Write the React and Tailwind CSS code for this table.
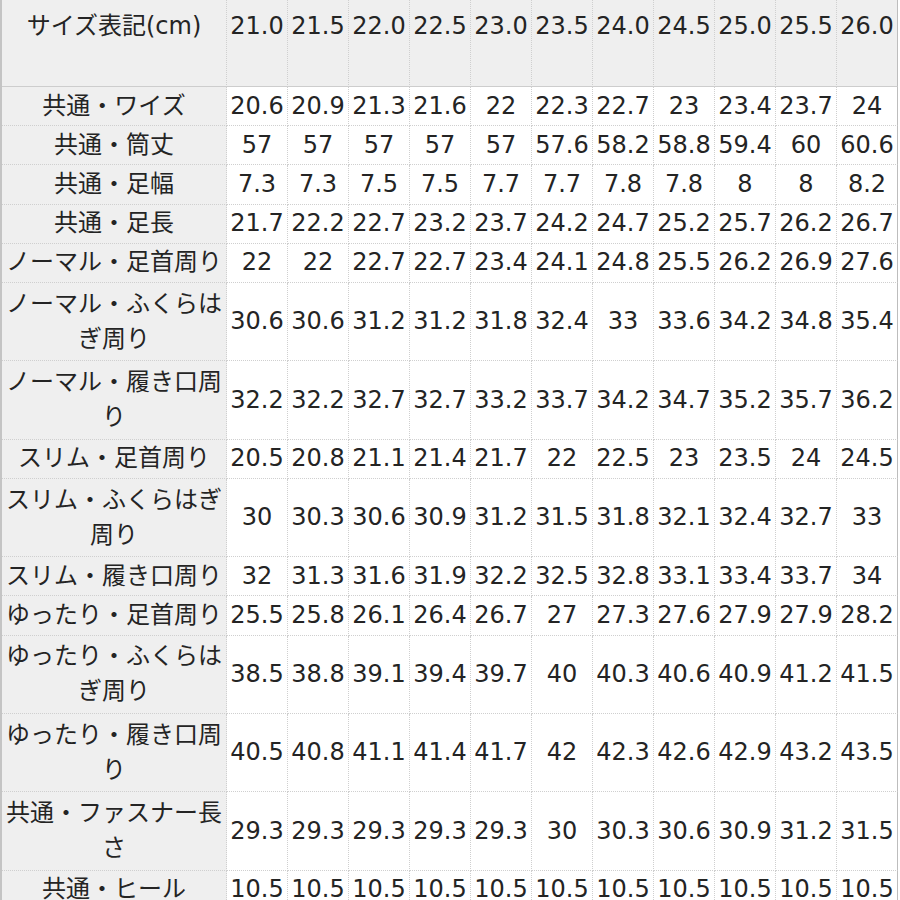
import React from "react";

const header = ["21.0","21.5","22.0","22.5","23.0","23.5","24.0","24.5","25.0","25.5","26.0"];

const rows = [
  [["共通・ワイズ"], "20.6 20.9 21.3 21.6 22 22.3 22.7 23 23.4 23.7 24"],
  [["共通・筒丈"], "57 57 57 57 57 57.6 58.2 58.8 59.4 60 60.6"],
  [["共通・足幅"], "7.3 7.3 7.5 7.5 7.7 7.7 7.8 7.8 8 8 8.2"],
  [["共通・足長"], "21.7 22.2 22.7 23.2 23.7 24.2 24.7 25.2 25.7 26.2 26.7"],
  [["ノーマル・足首周り"], "22 22 22.7 22.7 23.4 24.1 24.8 25.5 26.2 26.9 27.6"],
  [["ノーマル・ふくらは", "ぎ周り"], "30.6 30.6 31.2 31.2 31.8 32.4 33 33.6 34.2 34.8 35.4"],
  [["ノーマル・履き口周", "り"], "32.2 32.2 32.7 32.7 33.2 33.7 34.2 34.7 35.2 35.7 36.2"],
  [["スリム・足首周り"], "20.5 20.8 21.1 21.4 21.7 22 22.5 23 23.5 24 24.5"],
  [["スリム・ふくらはぎ", "周り"], "30 30.3 30.6 30.9 31.2 31.5 31.8 32.1 32.4 32.7 33"],
  [["スリム・履き口周り"], "32 31.3 31.6 31.9 32.2 32.5 32.8 33.1 33.4 33.7 34"],
  [["ゆったり・足首周り"], "25.5 25.8 26.1 26.4 26.7 27 27.3 27.6 27.9 27.9 28.2"],
  [["ゆったり・ふくらは", "ぎ周り"], "38.5 38.8 39.1 39.4 39.7 40 40.3 40.6 40.9 41.2 41.5"],
  [["ゆったり・履き口周", "り"], "40.5 40.8 41.1 41.4 41.7 42 42.3 42.6 42.9 43.2 43.5"],
  [["共通・ファスナー長", "さ"], "29.3 29.3 29.3 29.3 29.3 30 30.3 30.6 30.9 31.2 31.5"],
  [["共通・ヒール"], "10.5 10.5 10.5 10.5 10.5 10.5 10.5 10.5 10.5 10.5 10.5"],
];

const font = { fontFamily: '"DejaVu Sans", "Noto Sans CJK JP", sans-serif' };

export default function App() {
  return (
    <div className="w-[900px] bg-white text-[#242424]" style={font}>
      <div className="w-[898px] border-l-2 border-[#c4c4c4] grid grid-cols-[225px_repeat(11,61px)] text-[24px] leading-[35px]">
        <div className="h-[87px] bg-[#efefef] border-b border-b-[#cdcdcd] border-r border-r-[#cfcfcf] border-dotted flex justify-center pt-[9px] whitespace-nowrap [border-bottom-style:solid]">
          サイズ表記(cm)
        </div>
        {header.map((h, i) => (
          <div
            key={i}
            className={`h-[87px] bg-[#efefef] border-b border-b-[#cdcdcd] [border-bottom-style:solid] flex justify-center pt-[9px] whitespace-nowrap border-r ${i === 10 ? "border-r-[#bdbdbd] [border-right-style:solid]" : "border-r-[#cfcfcf] [border-right-style:dotted]"}`}
          >
            {h}
          </div>
        ))}
        {rows.map(([label, vals], r) => {
          const dbl = label.length > 1;
          const h = dbl ? "h-[78.4px]" : "h-[39.2px]";
          return (
            <React.Fragment key={r}>
              <div className={`${h} bg-[#efefef] border-b border-r border-[#cfcfcf] border-dotted flex flex-col items-center justify-center whitespace-nowrap`}>
                {label.map((l, k) => (
                  <span key={k}>{l}</span>
                ))}
              </div>
              {vals.split(" ").map((v, i) => (
                <div
                  key={i}
                  className={`${h} bg-white border-b border-b-[#cfcfcf] [border-bottom-style:dotted] border-r flex items-center justify-center whitespace-nowrap ${i === 10 ? "border-r-[#bdbdbd] [border-right-style:solid]" : "border-r-[#cfcfcf] [border-right-style:dotted]"}`}
                >
                  {v}
                </div>
              ))}
            </React.Fragment>
          );
        })}
      </div>
    </div>
  );
}
